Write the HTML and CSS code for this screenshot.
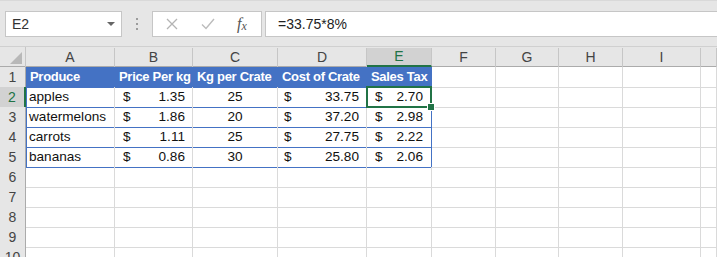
FILE: index.html
```html
<!DOCTYPE html>
<html lang="en">
<head>
  <meta charset="UTF-8" />
  <title>Produce - Sheet1</title>
  <link rel="stylesheet" href="styles.css">
</head>
<body>
  <div class="toolbar">
    <div class="name-box">
      <span>E2</span>
      <span class="caret"></span>
    </div>
    <div class="grip"><i></i><i></i><i></i></div>
    <div class="fx-box">
      <svg class="fx-icon" width="12" height="12" viewBox="0 0 12 12">
        <path d="M1 1 L11 11 M11 1 L1 11" stroke="#b4b4b4" stroke-width="1.3" fill="none" />
      </svg>
      <svg class="fx-icon" width="14" height="12" viewBox="0 0 14 12">
        <path d="M1 6.5 L5 10.5 L13 1" stroke="#bcbcbc" stroke-width="1.4" fill="none" />
      </svg>
      <span class="fx-label">f<sub>x</sub></span>
    </div>
    <div class="formula">=33.75*8%</div>
  </div>

  <div class="sheet">
    <div class="row heads">
      <div class="corner"><span class="tri"></span></div>
      <div class="ch">A</div>
      <div class="ch">B</div>
      <div class="ch">C</div>
      <div class="ch">D</div>
      <div class="ch active">E</div>
      <div class="ch">F</div>
      <div class="ch">G</div>
      <div class="ch">H</div>
      <div class="ch">I</div>
      <div class="ch"></div>
    </div>

    <div class="row">
      <div class="rh">1</div>
      <div class="c th first">Produce</div>
      <div class="c th">Price Per kg</div>
      <div class="c th">Kg per Crate</div>
      <div class="c th">Cost of Crate</div>
      <div class="c th last">Sales Tax</div>
      <div class="c"></div><div class="c"></div><div class="c"></div><div class="c"></div><div class="c"></div>
    </div>

    <div class="row">
      <div class="rh active">2</div>
      <div class="c td first">apples</div>
      <div class="c td acct b"><span>$</span><span>1.35</span></div>
      <div class="c td mid">25</div>
      <div class="c td acct d"><span>$</span><span>33.75</span></div>
      <div class="c td acct e last selected"><span>$</span><span>2.70</span></div>
      <div class="c"></div><div class="c"></div><div class="c"></div><div class="c"></div><div class="c"></div>
    </div>

    <div class="row">
      <div class="rh">3</div>
      <div class="c td first">watermelons</div>
      <div class="c td acct b"><span>$</span><span>1.86</span></div>
      <div class="c td mid">20</div>
      <div class="c td acct d"><span>$</span><span>37.20</span></div>
      <div class="c td acct e last"><span>$</span><span>2.98</span></div>
      <div class="c"></div><div class="c"></div><div class="c"></div><div class="c"></div><div class="c"></div>
    </div>

    <div class="row">
      <div class="rh">4</div>
      <div class="c td first">carrots</div>
      <div class="c td acct b"><span>$</span><span>1.11</span></div>
      <div class="c td mid">25</div>
      <div class="c td acct d"><span>$</span><span>27.75</span></div>
      <div class="c td acct e last"><span>$</span><span>2.22</span></div>
      <div class="c"></div><div class="c"></div><div class="c"></div><div class="c"></div><div class="c"></div>
    </div>

    <div class="row">
      <div class="rh">5</div>
      <div class="c td first">bananas</div>
      <div class="c td acct b"><span>$</span><span>0.86</span></div>
      <div class="c td mid">30</div>
      <div class="c td acct d"><span>$</span><span>25.80</span></div>
      <div class="c td acct e last"><span>$</span><span>2.06</span></div>
      <div class="c"></div><div class="c"></div><div class="c"></div><div class="c"></div><div class="c"></div>
    </div>

    <div class="row">
      <div class="rh">6</div>
      <div class="c"></div><div class="c"></div><div class="c"></div><div class="c"></div><div class="c"></div>
      <div class="c"></div><div class="c"></div><div class="c"></div><div class="c"></div><div class="c"></div>
    </div>
    <div class="row">
      <div class="rh">7</div>
      <div class="c"></div><div class="c"></div><div class="c"></div><div class="c"></div><div class="c"></div>
      <div class="c"></div><div class="c"></div><div class="c"></div><div class="c"></div><div class="c"></div>
    </div>
    <div class="row">
      <div class="rh">8</div>
      <div class="c"></div><div class="c"></div><div class="c"></div><div class="c"></div><div class="c"></div>
      <div class="c"></div><div class="c"></div><div class="c"></div><div class="c"></div><div class="c"></div>
    </div>
    <div class="row">
      <div class="rh">9</div>
      <div class="c"></div><div class="c"></div><div class="c"></div><div class="c"></div><div class="c"></div>
      <div class="c"></div><div class="c"></div><div class="c"></div><div class="c"></div><div class="c"></div>
    </div>
    <div class="row">
      <div class="rh">10</div>
      <div class="c"></div><div class="c"></div><div class="c"></div><div class="c"></div><div class="c"></div>
      <div class="c"></div><div class="c"></div><div class="c"></div><div class="c"></div><div class="c"></div>
    </div>
  </div>
</body>
</html>
```

FILE: styles.css
```css
* {
  margin: 0;
  padding: 0;
  box-sizing: border-box;
}

body {
  font-family: 'Liberation Sans', Arial, sans-serif;
  background: #fff;
  width: 717px;
  height: 257px;
  overflow: hidden;
}

/* formula bar */

.toolbar {
  height: 46px;
  background: #e6e6e6;
  border-top: 1px solid #d9d9d9;
  padding: 10px 0 0 5px;
  display: flex;
  align-items: flex-start;
}

.name-box {
  width: 117px;
  height: 26px;
  background: #fff;
  border: 1px solid #c6c6c6;
  display: flex;
  align-items: center;
  padding-left: 6px;
  font-size: 14px;
  color: #333;
}

.caret {
  margin-left: auto;
  margin-right: 6px;
  border-left: 4px solid transparent;
  border-right: 4px solid transparent;
  border-top: 4px solid #666;
}

.grip {
  width: 30px;
  height: 26px;
  display: flex;
  flex-direction: column;
  align-items: center;
  justify-content: center;
  gap: 3px;
}

.grip i {
  width: 2px;
  height: 2px;
  background: #9c9c9c;
}

.fx-box {
  width: 110px;
  height: 26px;
  background: #fff;
  border: 1px solid #c6c6c6;
  display: flex;
  align-items: center;
  padding-left: 13px;
}

.fx-icon {
  margin-right: 23px;
}

.fx-label {
  font-family: 'Liberation Serif', serif;
  font-style: italic;
  font-size: 16px;
  color: #555;
  margin-left: -1px;
}

.fx-label sub {
  font-size: 12px;
  vertical-align: -1px;
}

.formula {
  flex: 1;
  height: 26px;
  margin-left: 3px;
  background: #fff;
  border: 1px solid #c6c6c6;
  border-right: none;
  padding-left: 12px;
  font-size: 14px;
  line-height: 24px;
  color: #222;
}

/* grid */

.row {
  display: grid;
  grid-template-columns: 26px 89px 78px 85px 89px 65px 64px 63px 64px 78px 1fr;
  height: 20px;
}

.row.heads {
  height: 21px;
  background: #e6e6e6;
  border-top: 1px solid #d0d0d0;
  border-bottom: 1px solid #ababab;
}

.corner {
  border-right: 1px solid #c6c6c6;
  position: relative;
}

.tri {
  position: absolute;
  right: 3px;
  bottom: 3px;
  border-left: 12px solid transparent;
  border-bottom: 12px solid #b8b8b8;
}

.ch {
  border-right: 1px solid #c6c6c6;
  text-align: center;
  font-size: 14px;
  line-height: 19px;
  color: #444;
  margin-top: 1px;
}

.ch.active {
  background: #d2d2d2;
  color: #217346;
  border-bottom: 2px solid #217346;
  line-height: 17px;
}

.rh {
  background: #e6e6e6;
  border-right: 1px solid #ababab;
  border-bottom: 1px solid #c6c6c6;
  text-align: center;
  font-size: 14px;
  line-height: 20px;
  color: #444;
}

.rh.active {
  background: #d2d2d2;
  color: #217346;
  border-right: 2px solid #217346;
}

.c {
  border-right: 1px solid #dadada;
  border-bottom: 1px solid #dadada;
  font-size: 13.6px;
  line-height: 20px;
  color: #111;
  padding: 0 3px;
  white-space: nowrap;
}

.th {
  background: #4472c4;
  border-color: #4472c4;
  color: #fff;
  font-weight: bold;
  font-size: 13px;
  letter-spacing: -0.3px;
  padding-left: 4px;
}

.td {
  border-bottom-color: #4472c4;
}

.first {
  border-left: 1px solid #4472c4;
  padding-left: 2px;
}

.th.first {
  padding-left: 3px;
}

.last {
  border-right-color: #4472c4;
}

.mid {
  text-align: center;
}

.acct {
  display: flex;
  justify-content: space-between;
  padding: 0 7px 0 8px;
}

.acct.d {
  padding-left: 6px;
}

.acct.e {
  padding-right: 8px;
}

.selected {
  position: relative;
}

.selected::after {
  content: '';
  position: absolute;
  top: -1px;
  left: -1px;
  right: -1px;
  bottom: -1px;
  border: 2px solid #217346;
}

.selected::before {
  content: '';
  position: absolute;
  right: -4px;
  bottom: -4px;
  width: 6px;
  height: 6px;
  background: #217346;
  border: 1px solid #fff;
  z-index: 1;
}
```
